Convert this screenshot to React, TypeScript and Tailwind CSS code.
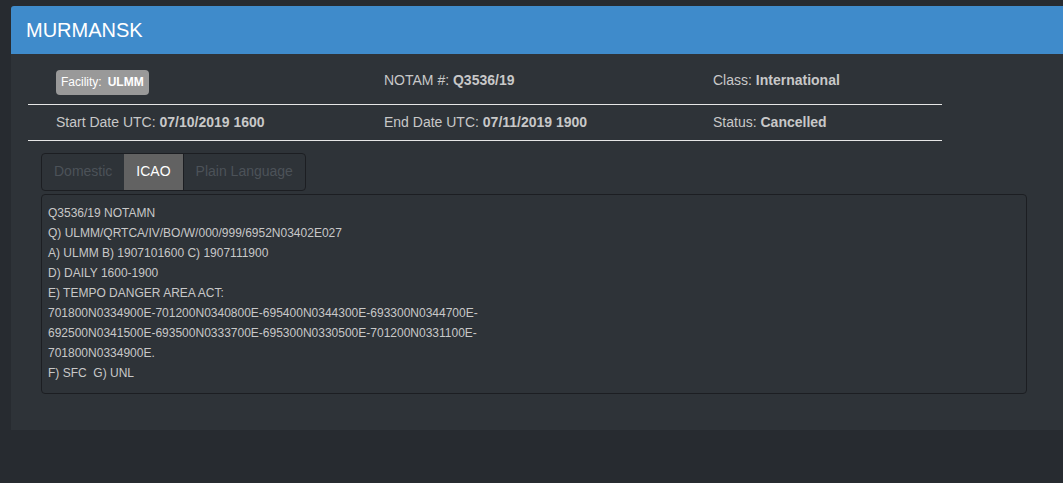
const notamText = [
  "Q3536/19 NOTAMN",
  "Q) ULMM/QRTCA/IV/BO/W/000/999/6952N03402E027",
  "A) ULMM B) 1907101600 C) 1907111900",
  "D) DAILY 1600-1900",
  "E) TEMPO DANGER AREA ACT:",
  "701800N0334900E-701200N0340800E-695400N0344300E-693300N0344700E-",
  "692500N0341500E-693500N0333700E-695300N0330500E-701200N0331100E-",
  "701800N0334900E.",
  "F) SFC\u00a0 G) UNL",
];

const Field = ({ label, value, className = "" }: { label: string; value: string; className?: string }) => (
  <div className={"text-[14px] leading-[20px] text-[#c8c8c8] " + className}>
    {label} <b className="font-bold">{value}</b>
  </div>
);

export default function App() {
  return (
    <div
      className="h-screen w-full overflow-hidden bg-[#272b30] pt-[6px]"
      style={{ fontFamily: '"Liberation Sans", Arial, sans-serif' }}
    >
      <div className="ml-[11px] w-[1070px] rounded-t-[4px] bg-[#2e3338] pb-[36px]">
        {/* heading */}
        <div className="flex h-[48px] items-center rounded-t-[3px] bg-[#3f8bcb] pl-[15px] text-[20px] text-white">
          MURMANSK
        </div>

        {/* details */}
        <div className="pl-[17px]">
          <div className="w-[914px]">
            <div className="grid grid-cols-[328px_329px_1fr] items-center pl-[28px] pt-[15px] pb-[9px]">
              <div>
                <span className="inline-flex h-[25px] items-center gap-[6px] rounded-[4px] bg-[#999999] px-[5px] text-[12px] text-white">
                  <span>Facility:</span>
                  <b className="font-bold">ULMM</b>
                </span>
              </div>
              <Field label="NOTAM #:" value="Q3536/19" className="-mt-[3px]" />
              <Field label="Class:" value="International" className="-mt-[3px]" />
            </div>
            <div className="h-[1px] bg-[#e6e6e6]" />
            <div className="grid grid-cols-[328px_329px_1fr] items-center pl-[28px] pt-[7px] pb-[8px]">
              <Field label="Start Date UTC:" value="07/10/2019 1600" />
              <Field label="End Date UTC:" value="07/11/2019 1900" />
              <Field label="Status:" value="Cancelled" />
            </div>
            <div className="h-[1px] bg-[#e6e6e6]" />
          </div>
        </div>

        {/* tabs */}
        <div className="pl-[30px] pt-[12px]">
          <div className="flex h-[38px] w-fit overflow-hidden rounded-[4px] border border-[#1c1e22] text-[14px]">
            <div className="flex items-center px-[12px] text-[#4c5258]">Domestic</div>
            <div className="flex items-center bg-[#626262] px-[12px] text-white">ICAO</div>
            <div className="flex items-center border-l border-[#1c1e22] px-[12px] text-[#4c5258]">
              Plain Language
            </div>
          </div>

          <div className="mt-[3px] w-[986px] rounded-[4px] border border-[#1c1e22] pl-[6px] pt-[8px] pb-[10px] text-[12px] leading-[20px] text-[#c8c8c8]">
            {notamText.map((line, i) => (
              <div key={i}>{line}</div>
            ))}
          </div>
        </div>
      </div>
    </div>
  );
}
